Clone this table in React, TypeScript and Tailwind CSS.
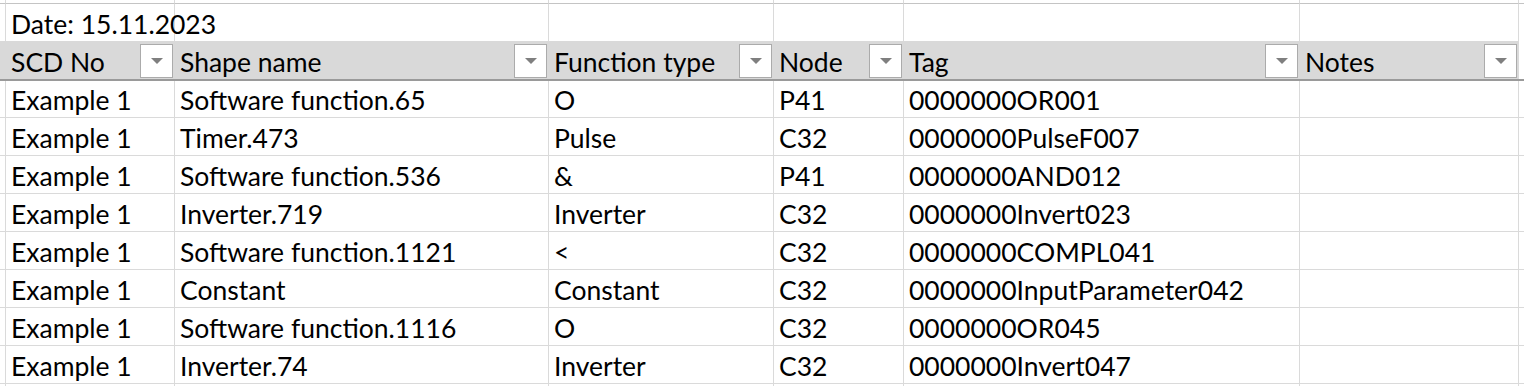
import React from "react";

const rows: string[][] = [
  ["Example 1", "Software function.65", "O", "P41", "0000000OR001", ""],
  ["Example 1", "Timer.473", "Pulse", "C32", "0000000PulseF007", ""],
  ["Example 1", "Software function.536", "&", "P41", "0000000AND012", ""],
  ["Example 1", "Inverter.719", "Inverter", "C32", "0000000Invert023", ""],
  ["Example 1", "Software function.1121", "<", "C32", "0000000COMPL041", ""],
  ["Example 1", "Constant", "Constant", "C32", "0000000InputParameter042", ""],
  ["Example 1", "Software function.1116", "O", "C32", "0000000OR045", ""],
  ["Example 1", "Inverter.74", "Inverter", "C32", "0000000Invert047", ""],
];

const headers = ["SCD No", "Shape name", "Function type", "Node", "Tag", "Notes"];

const gridCols = "grid grid-cols-[6px_169px_374px_225px_130px_396px_219px_1fr]";

function FilterButton() {
  return (
    <div className="absolute right-[1px] top-[3px] flex h-[34px] w-[33px] items-center justify-center border border-[#ababab] bg-white">
      <svg width="12" height="6" viewBox="0 0 12 6">
        <polygon points="0,0 12,0 6,6" fill="#7f7f7f" />
      </svg>
    </div>
  );
}

function BlankRow({ h }: { h: string }) {
  return (
    <div className={`${gridCols} ${h}`}>
      {Array.from({ length: 7 }).map((_, i) => (
        <div key={i} className="border-r border-b border-[#dadada]" />
      ))}
      <div className="border-b border-[#dadada]" />
    </div>
  );
}

export default function App() {
  return (
    <div
      className="h-[386px] w-[1524px] overflow-hidden bg-white text-[26.5px] text-black"
      style={{ fontFamily: "Lato, 'Noto Sans', sans-serif" }}
    >
      {/* partial row at top */}
      <div className={`${gridCols} h-[4px]`}>
        {Array.from({ length: 7 }).map((_, i) => (
          <div key={i} className="border-r border-b border-r-[#dadada] border-b-[#c4c4c4]" />
        ))}
        <div className="border-b border-[#c4c4c4]" />
      </div>

      {/* date row */}
      <div className={`${gridCols} h-[37px]`}>
        <div className="border-r border-[#dadada]" />
        <div className="relative border-r border-[#dadada]">
          <span className="absolute bottom-[4px] left-[5px] whitespace-nowrap leading-none">
            Date: 15.11.2023
          </span>
        </div>
        <div className="border-r border-[#dadada]" />
        <div className="border-r border-[#dadada]" />
        <div className="border-r border-[#dadada]" />
        <div className="border-r border-[#dadada]" />
        <div className="border-r border-[#dadada]" />
        <div />
      </div>

      {/* header row */}
      <div className={`${gridCols} h-[40px] border-b-2 border-[#9a9a9a] bg-[#d9d9d9]`}>
        <div className="border-r border-[#d9d9d9]" />
        {headers.map((h) => (
          <div key={h} className="relative flex items-end border-r border-[#d9d9d9] pb-[4px] pl-[5px]">
            <span className="whitespace-nowrap leading-none">{h}</span>
            <FilterButton />
          </div>
        ))}
        <div className="bg-white" />
      </div>

      {rows.map((r, ri) => (
        <div key={ri} className={`${gridCols} ${ri === 0 ? "h-[37px]" : "h-[38px]"}`}>
          <div className="border-r border-b border-[#dadada]" />
          {r.map((c, ci) => (
            <div
              key={ci}
              className="flex items-end overflow-hidden border-r border-b border-[#dadada] pb-[4px] pl-[5px]"
            >
              <span className="whitespace-nowrap leading-none">{c}</span>
            </div>
          ))}
          <div className="border-b border-[#dadada]" />
        </div>
      ))}

      <BlankRow h="h-[4px]" />
    </div>
  );
}
